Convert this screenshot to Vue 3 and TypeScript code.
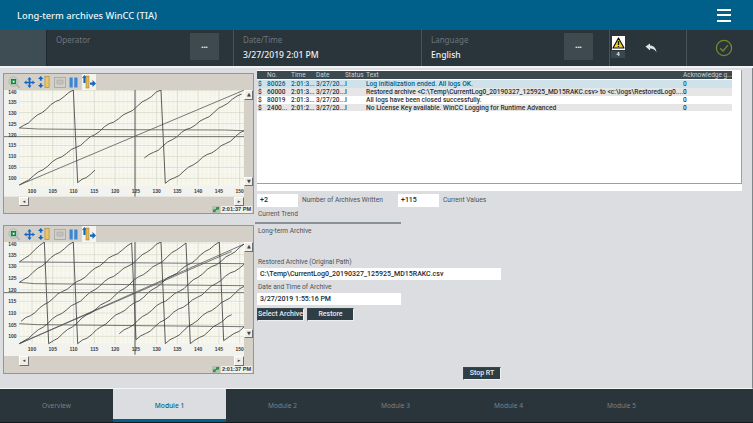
<script setup lang="ts">
type Pt = [number, number]
interface Trend {
  top: number
  height: number
  y140: number
  yStep: number
  plotBottom: number
  cursorY: number
  stairs: Pt[][]
  straight: Pt[][]
}

const stair = (pts: Pt[]): string => {
  const out: string[] = []
  for (let i = 0; i < pts.length; i += 2) {
    const [x0, y0] = pts[i]
    const [x1, y1] = pts[i + 1]
    const n = Math.max(1, Math.round((x1 - x0) / 14))
    for (let k = 0; k <= n; k++) {
      const t = k / n
      const edge = k === 0 || k === n ? 0 : 1
      const w = edge * (Math.sin(k * 1.7 + x0) * 2.6 + Math.sin(k * 0.6) * 1.8)
      out.push(`${(x0 + (x1 - x0) * t).toFixed(1)},${(y0 + (y1 - y0) * t + w).toFixed(1)}`)
    }
  }
  return out.join(' ')
}

const flat = (pts: Pt[]): string => pts.map((p) => p.join(',')).join(' ')

const trends: Trend[] = [
  {
    top: 58,
    height: 320,
    y140: 60,
    yStep: 32.9,
    plotBottom: 345,
    cursorY: 198,
    stairs: [
      [[55, 172], [217, 58], [230, 336], [282, 298]],
      [[55, 343], [480, 58], [493, 338], [730, 180]],
      [[430, 262], [722, 70]],
    ],
    straight: [
      [[55, 343], [730, 58]],
      [[55, 172], [110, 175], [340, 177], [670, 178], [730, 180]],
    ],
  },
  {
    top: 62,
    height: 343,
    y140: 65,
    yStep: 35,
    plotBottom: 367,
    cursorY: 214,
    stairs: [
      [[55, 122], [130, 62], [143, 367], [555, 65], [568, 367], [692, 280]],
      [[55, 183], [217, 62], [230, 367], [655, 62], [668, 358], [730, 316]],
      [[55, 367], [480, 62], [493, 367], [730, 195]],
      [[355, 337], [730, 68]],
      [[60, 300], [392, 65], [405, 355], [730, 128]],
    ],
    straight: [
      [[55, 367], [730, 68]],
      [[55, 367], [692, 90]],
      [[55, 122], [220, 123], [730, 127]],
      [[55, 183], [100, 187], [730, 193]],
      [[55, 307], [110, 310], [730, 316]],
    ],
  },
]

const range = (a: number, b: number, step = 1): number[] => {
  const r: number[] = []
  for (let i = a; i <= b; i += step) r.push(i)
  return r
}
const xOf = (v: number): number => 93 + (v - 100) * 12.46
const xMinor = range(97, 154).filter((v) => v % 5 !== 0 && xOf(v) > 55 && xOf(v) < 730)
const xMajor = range(100, 150, 5)
const yLabels = range(100, 140, 5).reverse()
const yOf = (t: Trend, v: number): number => t.y140 + (140 - v) * (t.yStep / 5)
const yLabel = (t: Trend, v: number): number => Math.max(yOf(t, v) + 6, t.top + 13)
const yMinor = range(97, 140).filter((v) => v % 5 !== 0)

const rows = [
  { no: '80026', time: '2:01:3...', text: 'Log initialization ended. All logs OK.', cls: 'sel' },
  {
    no: '60000',
    time: '2:01:3...',
    text: 'Restored archive <C:\\Temp\\CurrentLog0_20190327_125925_MD15RAKC.csv> to <c:\\logs\\RestoredLog0....',
    cls: 'alt',
  },
  { no: '80019', time: '2:01:3...', text: 'All logs have been closed successfully.', cls: '' },
  { no: '2400...', time: '2:01:2...', text: 'No License Key available. WinCC Logging for Runtime Advanced', cls: 'alt' },
]
const tabs = ['Overview', 'Module 1', 'Module 2', 'Module 3', 'Module 4', 'Module 5']
</script>

<template>
  <div class="page">
    <header class="title">
      <span>Long-term archives WinCC (TIA)</span>
      <div class="burger"><i></i><i></i><i></i></div>
    </header>

    <div class="bar">
      <div class="home"></div>
      <div class="field op">
        <div class="ftext"><label>Operator</label></div>
        <button class="dots">•••</button>
      </div>
      <div class="field dt">
        <div class="ftext"><label>Date/Time</label><b>3/27/2019 2:01 PM</b></div>
      </div>
      <div class="field lang">
        <div class="ftext"><label>Language</label><b>English</b></div>
        <button class="dots">•••</button>
      </div>
      <div class="alarm">
        <div class="alarm-icon">
          <svg width="13" height="14" viewBox="0 0 13 14">
            <rect width="13" height="14" fill="#fff" />
            <path d="M6.5 2 L12 12 H1 Z" fill="#f3d21a" stroke="#111" stroke-width="1.2" stroke-linejoin="round" />
            <path d="M6.5 5 V9 M6.5 10 V11" stroke="#111" stroke-width="1.3" />
          </svg>
          <span>4</span>
        </div>
        <svg class="back" width="12" height="10" viewBox="0 0 12 10">
          <path d="M0.5 3.6 L5 0.4 V2.4 C8.5 2.4 11 4.5 11.5 9.4 C10 6.8 8 5.6 5 5.6 V7.4 Z" fill="#dfe3e5" />
        </svg>
      </div>
      <div class="ok">
        <svg width="18" height="18" viewBox="0 0 18 18">
          <circle cx="9" cy="9" r="7.6" fill="none" stroke="#76882c" stroke-width="1.3" />
          <path d="M5.2 9.2 L8 12 L13 6.2" fill="none" stroke="#76882c" stroke-width="1.3" />
        </svg>
      </div>
    </div>

    <main class="content">
      <section class="left">
        <div v-for="(t, ti) in trends" :key="ti" class="trend">
          <div class="toolbar">
            <svg width="12" height="13" viewBox="0 0 13 14">
              <circle cx="6" cy="6" r="5" fill="#d9e2dc" stroke="#a4adb0" />
              <rect x="3.5" y="3.5" width="5" height="5" fill="#2a9a4a" stroke="#14602c" stroke-width="0.8" />
              <rect x="5.2" y="5.2" width="1.8" height="1.8" fill="#fff" />
              <path d="M9.5 9.5 L12.5 12.8" stroke="#a4adb0" stroke-width="1.6" />
            </svg>
            <svg width="11" height="11" viewBox="0 0 13 13">
              <path
                d="M6.5 0 L9 3 H7.5 V5.5 H10 V4 L13 6.5 L10 9 V7.5 H7.5 V10 H9 L6.5 13 L4 10 H5.5 V7.5 H3 V9 L0 6.5 L3 4 V5.5 H5.5 V3 H4 Z"
                fill="#1466c0"
              />
            </svg>
            <svg width="12" height="12" viewBox="0 0 13 13">
              <path d="M3 0 L6 3.2 H4 V5.2 H2 V3.2 H0 Z M2 7.8 H4 V9.8 H6 L3 13 L0 9.8 H2 Z" fill="#1466c0" />
              <rect x="7.5" y="0.5" width="4.5" height="12" fill="#e8c468" stroke="#a58c45" stroke-width="0.7" />
            </svg>
            <svg width="12" height="11" viewBox="0 0 12 11">
              <rect x="0.5" y="0.5" width="11" height="10" fill="#d2d0ca" stroke="#aeaca6" />
              <rect x="3" y="3" width="6" height="4" fill="#c4c2bb" stroke="#a8a69f" stroke-width="0.6" />
            </svg>
            <svg width="9" height="11" viewBox="0 0 9 11">
              <rect x="0.5" y="0.5" width="3.2" height="10" fill="#3a86d8" />
              <rect x="5.3" y="0.5" width="3.2" height="10" fill="#3a86d8" />
            </svg>
            <span class="toggle">
              <svg width="14" height="14" viewBox="0 0 14 14">
                <path d="M2.5 0 L5 3 H3.6 V8 H1.4 V3 H0 Z" fill="#1466c0" />
                <rect x="4" y="1" width="3" height="12" fill="#e8b94a" stroke="#8d7430" stroke-width="0.5" />
                <path d="M8 7.5 H10.5 V5 L14 8.5 L10.5 12 V9.7 H8 Z" fill="#1466c0" />
              </svg>
            </span>
          </div>

          <div class="mid">
            <svg
              class="plot"
              :viewBox="`9 ${t.top} 721 ${t.height}`"
              :width="240.33"
              :height="t.height / 3"
            >
              <rect x="9" :y="t.top" width="721" :height="t.height" fill="#f2f2ee" />
              <rect x="55" :y="t.top" width="675" :height="t.plotBottom - t.top" fill="#fafaf4" />
              <line
                v-for="v in xMinor"
                :key="'xm' + v"
                :x1="xOf(v)"
                :x2="xOf(v)"
                :y1="t.top"
                :y2="t.plotBottom"
                stroke="#efecd8"
                stroke-width="1.5"
              />
              <line
                v-for="v in yMinor"
                :key="'ym' + v"
                x1="55"
                x2="730"
                :y1="yOf(t, v)"
                :y2="yOf(t, v)"
                stroke="#efecd8"
                stroke-width="1.5"
              />
              <line
                v-for="v in xMajor"
                :key="'xj' + v"
                :x1="xOf(v)"
                :x2="xOf(v)"
                :y1="t.top"
                :y2="t.plotBottom"
                stroke="#d2d3c4"
                stroke-width="2"
              />
              <line
                v-for="v in yLabels"
                :key="'yj' + v"
                x1="55"
                x2="730"
                :y1="yOf(t, v)"
                :y2="yOf(t, v)"
                stroke="#d2d3c4"
                stroke-width="2"
              />
              <polyline
                v-for="(s, i) in t.straight"
                :key="'s' + i"
                :points="flat(s)"
                fill="none"
                stroke="#55585a"
                stroke-width="2.4"
              />
              <polyline
                v-for="(s, i) in t.stairs"
                :key="'r' + i"
                :points="stair(s)"
                fill="none"
                stroke="#33363a"
                stroke-width="2.4"
              />
              <line x1="9" x2="730" :y1="t.cursorY" :y2="t.cursorY" stroke="#6a6c6c" stroke-width="3" />
              <line x1="402" x2="402" :y1="t.top" :y2="t.plotBottom + 33" stroke="#55585a" stroke-width="3" />
              <text
                v-for="v in yLabels"
                :key="'yl' + v"
                x="34"
                :y="yLabel(t, v)"
                text-anchor="middle"
                class="axis"
              >{{ v }}</text>
              <text
                v-for="v in xMajor"
                :key="'xl' + v"
                :x="xOf(v)"
                :y="t.plotBottom + 23"
                text-anchor="middle"
                class="axis"
              >{{ v }}</text>
            </svg>
            <div class="vscroll">
              <span class="sbtn">▲</span>
              <span class="sbtn">▼</span>
            </div>
          </div>

          <div class="hscroll">
            <span class="sbtn">◂</span>
            <span class="sbtn">▸</span>
          </div>

          <div class="status">
            <svg width="8" height="7" viewBox="0 0 8 7">
              <rect width="8" height="7" fill="#b8bdb6" />
              <rect x="1" y="3.5" width="2.6" height="2.6" fill="#1f9a3f" />
              <rect x="4.2" y="1" width="2.8" height="2.6" fill="#1f9a3f" />
              <path d="M3 4 L5 3" stroke="#0c5c25" stroke-width="0.7" />
            </svg>
            <span class="clock">2:01:37 PM</span>
          </div>
        </div>
      </section>

      <section class="right">
        <div class="table">
          <div class="thead">
            <span class="c0"></span><span class="c1">No.</span><span class="c2">Time</span><span class="c3">Date</span>
            <span class="c4">Status</span><span class="c5">Text</span><span class="c6">Acknowledge g...</span>
          </div>
          <div v-for="r in rows" :key="r.no" class="trow" :class="r.cls">
            <span class="c0">$</span><span class="c1">{{ r.no }}</span><span class="c2">{{ r.time }}</span>
            <span class="c3">3/27/20...</span><span class="c4">I</span><span class="c5">{{ r.text }}</span>
            <span class="c6">0</span>
          </div>
          <div class="tfoot"></div>
        </div>

        <div class="values">
          <div class="input short">+2</div>
          <label class="written">Number of Archives Written</label>
          <div class="input short">+115</div>
          <label>Current Values</label>
        </div>
        <label class="ct">Current Trend</label>
        <div class="rule"></div>
        <label class="lta">Long-term Archive</label>

        <label class="ra">Restored Archive (Original Path)</label>
        <div class="input path">C:\Temp\CurrentLog0_20190327_125925_MD15RAKC.csv</div>
        <label class="da">Date and Time of Archive</label>
        <div class="input date">3/27/2019 1:55:16 PM</div>
        <div class="buttons">
          <button class="act">Select Archive</button>
          <button class="act">Restore</button>
        </div>
        <button class="act stop">Stop RT</button>
      </section>
    </main>

    <nav class="tabs">
      <div v-for="(t, i) in tabs" :key="t" class="tab" :class="{ on: i === 1 }">{{ t }}</div>
    </nav>
  </div>
</template>

<style>
html,
body {
  margin: 0;
  overflow: hidden;
}
</style>

<style scoped>
.page {
  width: 753px;
  height: 423px;
  display: flex;
  flex-direction: column;
  background: #dcdde0;
  font-family: 'Noto Sans', 'Open Sans', sans-serif;
  overflow: hidden;
}
.title {
  height: 30px;
  background: #00608a;
  color: #eef4f7;
  display: flex;
  align-items: center;
  justify-content: space-between;
  padding: 0 22px 0 17px;
  font-size: 9.3px;
  font-weight: 500;
  flex: none;
}
.burger {
  width: 14px;
  display: flex;
  flex-direction: column;
  gap: 3.5px;
}
.burger i {
  height: 2px;
  background: #fff;
}
.bar {
  height: 36px;
  flex: none;
  background: #2a343b;
  display: flex;
  border-bottom: 2px solid #f2f3f4;
  box-sizing: content-box;
}
.home {
  width: 47px;
  background: #3e4d54;
  border-right: 1px solid #1f282d;
  box-sizing: border-box;
}
.field {
  display: flex;
  justify-content: space-between;
  box-sizing: border-box;
  border-right: 1px solid #48545b;
  padding: 3px 14px 0 9px;
}
.field.op {
  width: 187px;
}
.field.dt {
  width: 188px;
}
.field.lang {
  width: 188px;
  padding-right: 16px;
}
.ftext {
  display: flex;
  flex-direction: column;
}
.ftext label {
  color: #6b777d;
  font-size: 8px;
  font-family: 'Noto Sans', sans-serif;
  line-height: 12px;
  margin-top: 1px;
}
.ftext b {
  color: #eef1f2;
  font-size: 8.6px;
  font-weight: 500;
  line-height: 12px;
  margin-top: 3px;
}
.dots {
  width: 29px;
  height: 27px;
  border: 0;
  border-radius: 1px;
  background: #3e4a50;
  color: #e6e9ea;
  font-size: 6px;
  letter-spacing: 0;
  padding: 0;
  font-family: 'Liberation Sans', sans-serif;
}
.alarm {
  width: 77px;
  box-sizing: border-box;
  border-right: 1px solid #48545b;
  display: flex;
  padding: 6px 0 0 1px;
}
.alarm-icon {
  width: 14px;
  display: flex;
  flex-direction: column;
  align-items: center;
}
.alarm-icon span {
  width: 14px;
  height: 7px;
  margin-top: 1px;
  background: #3c474d;
  color: #eef1f2;
  font-size: 5.5px;
  line-height: 7px;
  text-align: center;
  font-weight: 700;
}
.back {
  margin: 7px 0 0 20px;
}
.ok {
  flex: 1;
  display: flex;
  align-items: center;
  padding-left: 28px;
}
.content {
  height: 321px;
  flex: none;
  display: flex;
  box-sizing: border-box;
  padding: 5px 0 0 3px;
  border-bottom: 1px solid #f5f6f6;
  border-right: 1px solid #7f868a;
  position: relative;
}
.left {
  width: 251px;
  display: flex;
  flex-direction: column;
  gap: 11px;
}
.trend {
  width: 251px;
  background: #d4d0c8;
  border: 1px solid #8f979b;
  box-sizing: border-box;
  display: flex;
  flex-direction: column;
}
.toolbar {
  height: 16px;
  display: flex;
  align-items: center;
  gap: 3.5px;
  padding-left: 4px;
  flex: none;
}
.toggle {
  width: 14px;
  height: 16px;
  background: #f4f3ee;
  display: flex;
  align-items: center;
  justify-content: center;
}
.mid {
  display: flex;
  flex: none;
}
.plot {
  display: block;
  flex: none;
}
.axis {
  font-family: 'Liberation Sans', sans-serif;
  font-size: 15px;
  font-weight: 700;
  fill: #3a3d40;
}
.vscroll {
  width: 9px;
  flex: none;
  display: flex;
  flex-direction: column;
  justify-content: space-between;
  height: 96px;
  background: #d4d0c8;
}
.sbtn {
  width: 10px;
  height: 9.5px;
  flex: none;
  background: #eeede8;
  border-top: 1px solid #fff;
  border-left: 1px solid #fff;
  border-right: 1px solid #6f6f6f;
  border-bottom: 1px solid #6f6f6f;
  box-sizing: border-box;
  font-size: 5px;
  line-height: 7px;
  text-align: center;
  color: #444;
  font-family: 'DejaVu Sans', sans-serif;
}
.vscroll .sbtn {
  width: 9px;
}
.hscroll {
  height: 9.5px;
  margin: 0 0 0 15px;
  width: 225px;
  display: flex;
  justify-content: space-between;
  flex: none;
}
.status {
  flex: 1;
  display: flex;
  justify-content: flex-end;
  align-items: center;
  gap: 1px;
  padding-right: 1px;
}
.clock {
  width: 31px;
  height: 7px;
  background: #f2f1ec;
  font-family: 'Liberation Sans', sans-serif;
  font-size: 5.6px;
  font-weight: 700;
  line-height: 7px;
  color: #33383b;
  text-align: center;
}
.right {
  margin-left: 3px;
  flex: 1;
  margin-top: -3px;
  display: flex;
  flex-direction: column;
  align-items: flex-start;
  position: relative;
  font-family: Roboto, 'Noto Sans', sans-serif;
}
.table {
  width: 485px;
  height: 121px;
  background: #fff;
  padding-top: 1px;
  box-sizing: border-box;
  position: relative;
  flex: none;
  margin-right: 11px;
  font-size: 6.5px;
  font-weight: 500;
  color: #2a3035;
}
.table::after {
  content: '';
  position: absolute;
  right: 0;
  top: 0;
  bottom: 7px;
  width: 1px;
  background: #9aa1a5;
}
.thead,
.trow {
  display: flex;
  width: 475px;
  white-space: nowrap;
  line-height: 8px;
}
.thead {
  background: #3c4a50;
  color: #c9d1d5;
  font-weight: 400;
  height: 8px;
  margin-bottom: 1px;
}
.trow {
  height: 7.85px;
}
.trow.sel {
  background: #cfe2ea;
  color: #005f87;
}
.trow.alt {
  background: #e6e6e6;
}
.c0 {
  width: 10px;
  padding-left: 1px;
  box-sizing: border-box;
  flex: none;
}
.c1 {
  width: 24px;
  flex: none;
}
.c2 {
  width: 25px;
  flex: none;
}
.c3 {
  width: 29px;
  flex: none;
}
.c4 {
  width: 21px;
  flex: none;
}
.c5 {
  width: 317px;
  flex: none;
  font-size: 6.65px;
}
.c6 {
  flex: 1;
}
.tfoot {
  position: absolute;
  left: 0;
  right: 0;
  bottom: 7px;
  height: 1px;
  background: #9aa1a5;
}
label {
  font-size: 6.6px;
  color: #4a5257;
  line-height: 9px;
  white-space: nowrap;
}
.values {
  display: flex;
  align-items: center;
  margin-top: 3px;
  height: 13px;
}
.values label {
  margin-left: 4px;
}
.values .written {
  width: 96px;
  flex: none;
}
.input {
  background: #fff;
  font-size: 7px;
  font-weight: 500;
  color: #23282c;
  box-sizing: border-box;
  height: 13px;
  line-height: 13px;
  padding-left: 3px;
}
.short {
  width: 41px;
  flex: none;
}
.ct {
  margin: 3px 0 0 1px;
}
.rule {
  width: 146px;
  height: 1.5px;
  background: #8a9196;
  margin: 3px 0 0 -2px;
  flex: none;
}
.lta {
  margin: 3px 0 0 1px;
}
.ra {
  margin: 22px 0 0 1px;
}
.path {
  width: 244px;
  margin-top: 1px;
  height: 12px;
  line-height: 12px;
}
.da {
  margin: 3px 0 0 1px;
}
.date {
  width: 144px;
  margin-top: 1px;
  height: 12px;
  line-height: 12px;
}
.buttons {
  display: flex;
  gap: 3px;
  margin-top: 3px;
}
.act {
  width: 47px;
  height: 13px;
  background: #2f3d44;
  color: #e8ecee;
  border: 1px solid #eceeef;
  border-top-color: #39464c;
  border-left-color: #39464c;
  padding: 0;
  font-family: inherit;
  font-size: 7px;
  font-weight: 500;
  line-height: 10px;
  white-space: nowrap;
}
.stop {
  width: 38px;
  position: relative;
  left: 206px;
  margin-top: 46px;
}
.tabs {
  flex: 1;
  background: #2a343b;
  display: flex;
  border-bottom: 1px solid #14191c;
}
.tab {
  width: 113px;
  text-align: center;
  font-size: 6.6px;
  color: #76838a;
  line-height: 34px;
  height: 33px;
  box-sizing: border-box;
}
.tab.on {
  background: #dcdde0;
  color: #005f87;
  font-weight: 500;
  border-bottom: 3px solid #00608a;
}
</style>
